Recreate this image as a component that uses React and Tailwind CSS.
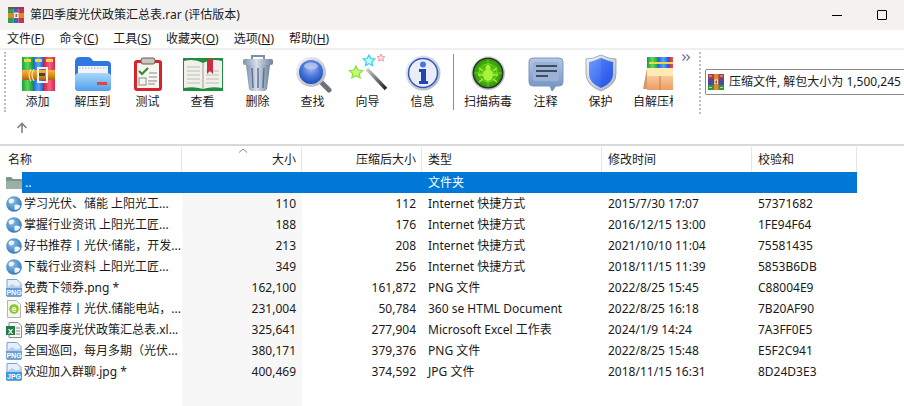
// App.jsx
const FONT = { fontFamily: '"Noto Sans", "Noto Sans CJK SC", sans-serif' };

const Rar16 = () => (
  <svg width="16" height="16" viewBox="0 0 16 16">
    <rect x="0" y="0" width="5.5" height="16" fill="#2f9e44" />
    <rect x="5.5" y="0" width="5" height="16" fill="#3f63c8" />
    <rect x="10.5" y="0" width="5.5" height="16" fill="#c8324e" />
    <rect x="0" y="0" width="16" height="2" fill="#8b2f4d" opacity="0.6" />
    <rect x="0" y="6" width="16" height="5" fill="#d98a2b" />
    <rect x="6" y="5.5" width="4.5" height="5.5" fill="#f6f0e4" />
    <rect x="7.5" y="7" width="1.5" height="3" fill="#b5502a" />
  </svg>
);

const InfoRar = () => (
  <svg width="16" height="16" viewBox="0 0 16 16">
    <rect x="0" y="0" width="16" height="5" fill="#a73a55" />
    <rect x="0" y="5" width="16" height="6" fill="#4b4aa3" />
    <rect x="0" y="11" width="16" height="5" fill="#2c9a45" />
    <rect x="6" y="0" width="4.5" height="16" fill="#dd8a2c" />
    <rect x="6.5" y="5.5" width="3.5" height="4.5" fill="#f7f1e6" />
    <rect x="7.5" y="6.5" width="1.5" height="3" fill="#b33a2c" />
    <rect x="1" y="1.5" width="3" height="1" fill="#e9c65a" />
    <rect x="12" y="1.5" width="3" height="1" fill="#e9c65a" />
    <rect x="1" y="13" width="3" height="1" fill="#e9c65a" />
    <rect x="12" y="13" width="3" height="1" fill="#e9c65a" />
  </svg>
);

// toolbar icons are all drawn on a 40x40 box
const Icon = ({ children }) => (
  <svg width="40" height="40" viewBox="0 0 40 40" className="shrink-0">
    {children}
  </svg>
);

const Defs = () => (
  <svg width="0" height="0" className="absolute">
    <defs>
      <linearGradient id="gGreen" x1="0" x2="1" y1="0" y2="0">
        <stop offset="0" stopColor="#17a03c" />
        <stop offset="0.5" stopColor="#5fd65a" />
        <stop offset="1" stopColor="#179a3a" />
      </linearGradient>
      <linearGradient id="gBlue" x1="0" x2="1" y1="0" y2="0">
        <stop offset="0" stopColor="#1d5fd8" />
        <stop offset="0.5" stopColor="#5ba2f5" />
        <stop offset="1" stopColor="#1c55c8" />
      </linearGradient>
      <linearGradient id="gRed" x1="0" x2="1" y1="0" y2="0">
        <stop offset="0" stopColor="#d81f45" />
        <stop offset="0.5" stopColor="#f8607e" />
        <stop offset="1" stopColor="#d4264f" />
      </linearGradient>
      <linearGradient id="gBelt" x1="0" x2="0" y1="0" y2="1">
        <stop offset="0" stopColor="#f7b53c" />
        <stop offset="0.5" stopColor="#e48f22" />
        <stop offset="1" stopColor="#a8631b" />
      </linearGradient>
      <linearGradient id="gFolder" x1="0" x2="0" y1="0" y2="1">
        <stop offset="0" stopColor="#a9d8fb" />
        <stop offset="1" stopColor="#4f9fee" />
      </linearGradient>
      <linearGradient id="gCan" x1="0" x2="1" y1="0" y2="0">
        <stop offset="0" stopColor="#7e93ad" />
        <stop offset="0.45" stopColor="#d6dfea" />
        <stop offset="1" stopColor="#6c819c" />
      </linearGradient>
      <radialGradient id="gLens" cx="0.5" cy="0.35" r="0.7">
        <stop offset="0" stopColor="#a8b8ee" />
        <stop offset="0.5" stopColor="#4a78dc" />
        <stop offset="1" stopColor="#1746b0" />
      </radialGradient>
      <linearGradient id="gSilver" x1="0" x2="1" y1="0" y2="1">
        <stop offset="0" stopColor="#f4f6f9" />
        <stop offset="1" stopColor="#a9b2bf" />
      </linearGradient>
      <linearGradient id="gWand" x1="0" x2="1" y1="0" y2="1">
        <stop offset="0" stopColor="#cfcfcf" />
        <stop offset="1" stopColor="#222222" />
      </linearGradient>
      <radialGradient id="gScan" cx="0.5" cy="0.5" r="0.55">
        <stop offset="0" stopColor="#6fe01c" />
        <stop offset="1" stopColor="#2f8f08" />
      </radialGradient>
      <linearGradient id="gNote" x1="0" x2="0" y1="0" y2="1">
        <stop offset="0" stopColor="#b4c8e6" />
        <stop offset="1" stopColor="#6e8fc0" />
      </linearGradient>
      <linearGradient id="gShield" x1="0" x2="1" y1="0" y2="1">
        <stop offset="0" stopColor="#6f9cff" />
        <stop offset="1" stopColor="#1f50e6" />
      </linearGradient>
      <linearGradient id="gBox" x1="0" x2="0" y1="0" y2="1">
        <stop offset="0" stopColor="#f8c79a" />
        <stop offset="1" stopColor="#ec9d63" />
      </linearGradient>
      <radialGradient id="gGlobe" cx="0.4" cy="0.35" r="0.75">
        <stop offset="0" stopColor="#8fc0e8" />
        <stop offset="1" stopColor="#2470b4" />
      </radialGradient>
    </defs>
  </svg>
);

const AddIcon = () => (
  <Icon>
    <rect x="4" y="4" width="11" height="34" fill="url(#gGreen)" />
    <rect x="15" y="4" width="11" height="34" fill="url(#gBlue)" />
    <rect x="26" y="4" width="11" height="34" fill="url(#gRed)" />
    <rect x="6" y="6" width="7" height="3" fill="#f3d54a" />
    <rect x="17" y="6" width="7" height="3" fill="#f3d54a" />
    <rect x="28" y="6" width="7" height="3" fill="#f3d54a" />
    <rect x="4" y="17" width="33" height="10" fill="url(#gBelt)" />
    <path d="M13 16 q-4 6 0 12 M16 16 q-4 6 0 12" fill="none" stroke="#f9e3a6" strokeWidth="1.2" />
    <rect x="20" y="15" width="9" height="14" fill="none" stroke="#f4f1ea" strokeWidth="2" />
    <rect x="21" y="20" width="6" height="3" fill="#5b3f22" />
  </Icon>
);

const ExtractIcon = () => (
  <Icon>
    <path d="M2 9 q0 -5 5 -5 h8 q3 0 5 4 h14 q4 0 4 4 v22 q0 4 -4 4 h-28 q-4 0 -4 -4 z" fill="#2f78e0" />
    <rect x="5" y="13" width="30" height="9" fill="#f2f4f7" />
    <path d="M6 15 h28" stroke="#b5bcc6" strokeWidth="1" strokeDasharray="1.5 1.5" />
    <rect x="2" y="20" width="36" height="18" rx="4" fill="url(#gFolder)" />
    <rect x="24" y="29" width="10" height="3" fill="#e5452f" />
  </Icon>
);

const TestIcon = () => (
  <Icon>
    <rect x="6" y="7" width="28" height="31" rx="3" fill="#d8232c" />
    <rect x="9" y="10" width="22" height="25" fill="#f7f5f0" />
    <rect x="13" y="5" width="14" height="6" rx="2" fill="#c9c5bb" stroke="#6b5a50" strokeWidth="1" />
    <path d="M11 18 l3 3 l6 -6" fill="none" stroke="#2d8c3a" strokeWidth="2.2" />
    <rect x="11" y="25" width="7" height="7" fill="none" stroke="#8b8b8b" strokeWidth="1" />
    <path d="M21 20 h8 M21 24 h8 M20 28 h9 M20 31 h7" stroke="#8b8b8b" strokeWidth="1" />
  </Icon>
);

const ViewIcon = () => (
  <Icon>
    <rect x="-1" y="5" width="42" height="33" rx="1" fill="#1f8f3d" />
    <path d="M1 8 q10 -3 19 2 q9 -5 19 -2 v27 q-10 -2 -19 1 q-9 -3 -19 -1 z" fill="#f1f0ea" />
    <path d="M20 10 v26" stroke="#b8b7b0" strokeWidth="1.5" />
    <path d="M4 14 h13 M4 18 h13 M4 22 h13 M4 26 h13 M4 30 h13 M23 18 h13 M23 22 h13 M23 26 h13 M23 30 h13" stroke="#bdbdb8" strokeWidth="1" />
    <path d="M24 6 h6 v15 l-3 -3 l-3 3 z" fill="#d02b3f" />
  </Icon>
);

const TrashIcon = () => (
  <Icon>
    <path d="M14 6 v-3 h12 v3" fill="none" stroke="#7d8fa6" strokeWidth="2" />
    <rect x="5" y="6" width="30" height="6" rx="2" fill="url(#gCan)" />
    <path d="M8 12 h24 l-3 24 q-1 2 -3 2 h-12 q-2 0 -3 -2 z" fill="url(#gCan)" />
    <path d="M14 15 l1 20 M20 15 v20 M26 15 l-1 20" stroke="#5f7390" strokeWidth="1.5" />
  </Icon>
);

const FindIcon = () => (
  <Icon>
    <path d="M28 29 l8 8" stroke="#6d7278" strokeWidth="5" strokeLinecap="round" />
    <circle cx="18" cy="19" r="15" fill="url(#gSilver)" />
    <circle cx="18" cy="19" r="12" fill="url(#gLens)" />
    <ellipse cx="18" cy="13" rx="7" ry="3.5" fill="#c3cdf2" opacity="0.7" />
  </Icon>
);

const WizardIcon = () => (
  <Icon>
    <path d="M19 16 l19 20" stroke="url(#gWand)" strokeWidth="3.5" />
    <path d="M21 2 l1.8 3.5 l4 .5 l-3 2.6 l.8 4 l-3.6 -2 l-3.6 2 l.8 -4 l-3 -2.6 l4 -.5 z" fill="#c8f6ff" stroke="#23d6f0" strokeWidth="1.2" />
    <path d="M33 1 l1.2 2.3 l2.6 .4 l-1.9 1.8 l.5 2.6 l-2.4 -1.3 l-2.4 1.3 l.5 -2.6 l-1.9 -1.8 l2.6 -.4 z" fill="#fde0e3" stroke="#f29aa6" strokeWidth="1" />
    <path d="M8 13 l2 4 l4.5 .6 l-3.2 3 l.8 4.4 l-4.1 -2.2 l-4.1 2.2 l.8 -4.4 l-3.2 -3 l4.5 -.6 z" fill="#c7fb7a" stroke="#7fe32a" strokeWidth="1.2" />
  </Icon>
);

const InfoIcon = () => (
  <Icon>
    <circle cx="20" cy="20" r="17.5" fill="url(#gSilver)" />
    <circle cx="20" cy="20" r="14.5" fill="#e9edf5" stroke="#3556bb" strokeWidth="1.5" />
    <circle cx="20" cy="11.5" r="3" fill="#4679dd" />
    <path d="M16 16 h7 v12 h2 v3 h-9 v-3 h2 v-9 h-2 z" fill="#2146b4" />
  </Icon>
);

const ScanIcon = () => (
  <Icon>
    <circle cx="20" cy="20" r="17" fill="url(#gSilver)" />
    <circle cx="20" cy="20" r="15.5" fill="#2a2f2a" />
    <circle cx="20" cy="20" r="14" fill="url(#gScan)" />
    <path d="M20 6 v28 M6 20 h28" stroke="#8cf02e" strokeWidth="0.8" opacity="0.7" />
    <circle cx="20" cy="20" r="9" fill="none" stroke="#8cf02e" strokeWidth="0.8" opacity="0.7" />
    <ellipse cx="20" cy="22" rx="5" ry="6" fill="#a8f23c" />
    <circle cx="20" cy="14.5" r="2.5" fill="#a8f23c" />
    <path d="M15 18 l-4 -3 M25 18 l4 -3 M15 22 h-5 M25 22 h5 M15 26 l-4 3 M25 26 l4 3" stroke="#a8f23c" strokeWidth="1.4" />
  </Icon>
);

const NoteIcon = () => (
  <Icon>
    <path d="M7 5 h26 q4 0 4 4 v20 q0 4 -4 4 h-3 l-4 5 l-2 -5 h-17 q-4 0 -4 -4 v-20 q0 -4 4 -4 z" fill="url(#gNote)" stroke="#7f97bd" strokeWidth="1" />
    <rect x="7" y="9" width="26" height="19" rx="2" fill="#9bb2d4" />
    <path d="M10 13 h21 M10 18 h21 M10 23 h12" stroke="#3f4d63" strokeWidth="1.8" />
  </Icon>
);

const ShieldIcon = () => (
  <Icon>
    <path d="M20 2 q8 4 15 4 v15 q0 11 -15 17 q-15 -6 -15 -17 v-15 q7 0 15 -4 z" fill="url(#gSilver)" stroke="#8f9cae" strokeWidth="0.8" />
    <path d="M20 5 q7 3 12 4 v12 q0 9 -12 14 q-12 -5 -12 -14 v-12 q5 -1 12 -4 z" fill="url(#gShield)" />
    <path d="M20 5 q7 3 12 4 v12 q0 9 -12 14 z" fill="#1f50e6" opacity="0.25" />
  </Icon>
);

const SfxIcon = () => (
  <Icon>
    <rect x="4" y="4" width="11" height="14" fill="url(#gGreen)" />
    <rect x="15" y="4" width="11" height="14" fill="url(#gBlue)" />
    <rect x="26" y="4" width="11" height="14" fill="url(#gRed)" />
    <rect x="6" y="9" width="30" height="2" fill="#f3d54a" />
    <path d="M4 15 h34 v8 h-34 z" fill="#fde9b3" />
    <path d="M4 15 l-4 21 h4 z" fill="#d99a68" />
    <rect x="4" y="23" width="34" height="14" fill="url(#gBox)" />
    <path d="M17 23 v14" stroke="#c47a45" strokeWidth="1" fill="none" />
  </Icon>
);

const tools = [
  { label: '添加', icon: <AddIcon />, w: 'w-[55px]' },
  { label: '解压到', icon: <ExtractIcon />, w: 'w-[55px]' },
  { label: '测试', icon: <TestIcon />, w: 'w-[55px]' },
  { label: '查看', icon: <ViewIcon />, w: 'w-[55px]' },
  { label: '删除', icon: <TrashIcon />, w: 'w-[55px]' },
  { label: '查找', icon: <FindIcon />, w: 'w-[55px]' },
  { label: '向导', icon: <WizardIcon />, w: 'w-[55px]' },
  { label: '信息', icon: <InfoIcon />, w: 'w-[55px]' },
  { sep: true },
  { label: '扫描病毒', icon: <ScanIcon />, w: 'w-[60px]' },
  { label: '注释', icon: <NoteIcon />, w: 'w-[55px]' },
  { label: '保护', icon: <ShieldIcon />, w: 'w-[55px]' },
  { label: '自解压格式', icon: <SfxIcon />, w: 'w-[70px]' },
];

const menus = [
  ['文件(', 'F', ')'],
  ['命令(', 'C', ')'],
  ['工具(', 'S', ')'],
  ['收藏夹(', 'O', ')'],
  ['选项(', 'N', ')'],
  ['帮助(', 'H', ')'],
];

// small file type icons
const FolderSmall = () => (
  <svg width="16" height="16" viewBox="0 0 16 16">
    <path d="M0 3 q0 -1 1 -1 h4 l2 2 h8 q1 0 1 1 v8 q0 1 -1 1 h-14 q-1 0 -1 -1 z" fill="#7d9589" />
    <rect x="0" y="6" width="16" height="8" rx="1" fill="#9bb0a2" />
  </svg>
);

const GlobeIcon = () => (
  <svg width="16" height="16" viewBox="0 0 16 16">
    <circle cx="8" cy="8" r="7.8" fill="url(#gGlobe)" />
    <path d="M3.5 3 q3.5 -1.5 5 1 q-1 3.5 -4.5 3.5 q-2.5 -2 -.5 -4.5 z M8.5 9 q3.5 -1.5 6 1 q-2 4.5 -6 3.5 z" fill="#eef5fa" />
  </svg>
);

const ImgIcon = ({ kind }) => (
  <svg width="16" height="18" viewBox="0 0 16 18">
    <path d="M1 0.5 h10 l4 4 v13 h-14 z" fill="#e6effa" stroke="#7aa2d0" strokeWidth="1" />
    <path d="M2 8 q4 -5 7 -1 q2 1 5 -1 v3 h-12 z" fill="#b8cfe9" />
    <rect x="0" y="9" width="16" height="8" fill={kind === 'JPG' ? '#3a9be0' : '#6a9fd8'} />
    <text x="8" y="15.6" textAnchor="middle" fontSize="7" fontWeight="700" fill="#ffffff" fontFamily="Liberation Sans, sans-serif">{kind}</text>
  </svg>
);

const HtmlIcon = () => (
  <svg width="16" height="18" viewBox="0 0 16 18">
    <path d="M1.5 0.5 h9 l4 4 v13 h-13 z" fill="#f4f4f2" stroke="#b5b5b0" strokeWidth="1" />
    <circle cx="8" cy="9" r="4.8" fill="#8cc820" />
    <text x="8" y="12" textAnchor="middle" fontSize="8.5" fontWeight="700" fill="#ffffff" fontFamily="Liberation Sans, sans-serif">e</text>
  </svg>
);

const XlsIcon = () => (
  <svg width="16" height="16" viewBox="0 0 16 16">
    <path d="M3 0.5 h9 l3.5 3.5 v11.5 h-12.5 z" fill="#f7f7f5" stroke="#8a8a8a" strokeWidth="1" />
    <path d="M10 6 h4 M10 9 h4 M10 12 h4" stroke="#8a8a8a" strokeWidth="1" />
    <rect x="0" y="4" width="9" height="9" fill="#1e7b45" />
    <text x="4.5" y="11.5" textAnchor="middle" fontSize="8" fontWeight="700" fill="#ffffff" fontFamily="Liberation Sans, sans-serif">X</text>
  </svg>
);

const rows = [
  { icon: <GlobeIcon />, name: '学习光伏、储能 上阳光工...', size: '110', packed: '112', type: 'Internet 快捷方式', time: '2015/7/30 17:07', crc: '57371682' },
  { icon: <GlobeIcon />, name: '掌握行业资讯 上阳光工匠...', size: '188', packed: '176', type: 'Internet 快捷方式', time: '2016/12/15 13:00', crc: '1FE94F64' },
  { icon: <GlobeIcon />, name: '好书推荐丨光伏·储能，开发...', size: '213', packed: '208', type: 'Internet 快捷方式', time: '2021/10/10 11:04', crc: '75581435' },
  { icon: <GlobeIcon />, name: '下载行业资料 上阳光工匠...', size: '349', packed: '256', type: 'Internet 快捷方式', time: '2018/11/15 11:39', crc: '5853B6DB' },
  { icon: <ImgIcon kind="PNG" />, name: '免费下领券.png *', size: '162,100', packed: '161,872', type: 'PNG 文件', time: '2022/8/25 15:45', crc: 'C88004E9' },
  { icon: <HtmlIcon />, name: '课程推荐丨光伏.储能电站，...', size: '231,004', packed: '50,784', type: '360 se HTML Document', time: '2022/8/25 16:18', crc: '7B20AF90' },
  { icon: <XlsIcon />, name: '第四季度光伏政策汇总表.xl...', size: '325,641', packed: '277,904', type: 'Microsoft Excel 工作表', time: '2024/1/9 14:24', crc: '7A3FF0E5' },
  { icon: <ImgIcon kind="PNG" />, name: '全国巡回，每月多期（光伏...', size: '380,171', packed: '379,376', type: 'PNG 文件', time: '2022/8/25 15:48', crc: 'E5F2C941' },
  { icon: <ImgIcon kind="JPG" />, name: '欢迎加入群聊.jpg *', size: '400,469', packed: '374,592', type: 'JPG 文件', time: '2018/11/15 16:31', crc: '8D24D3E3' },
];

const COLS = 'grid grid-cols-[182px_120px_120px_180px_150px_105px] w-[857px]';

const Row = ({ row }) => (
  <div className={`${COLS} h-[21px] shrink-0 items-stretch text-[12px] leading-[21px] text-[#1a1a1a]`}>
    <div className="flex items-center pl-[6px] overflow-hidden">
      <span className="flex w-[18px] shrink-0">{row.icon}</span>
      <span className="whitespace-nowrap">{row.name}</span>
    </div>
    <div className="bg-[#f7f7f7] text-right pr-[6px]">{row.size}</div>
    <div className="text-right pr-[6px]">{row.packed}</div>
    <div className="pl-[6px] whitespace-nowrap">{row.type}</div>
    <div className="pl-[6px] whitespace-nowrap">{row.time}</div>
    <div className="pl-[6px] whitespace-nowrap">{row.crc}</div>
  </div>
);

export default function App() {
  return (
    <div className="relative w-[904px] h-[406px] overflow-hidden bg-white flex flex-col" style={FONT}>
      <Defs />

      {/* Title bar */}
      <div className="h-[30px] bg-[#f3f2f1] flex items-center pl-[8px] shrink-0">
        <Rar16 />
        <span className="ml-[6px] text-[12px] text-[#1a1a1a] whitespace-nowrap">第四季度光伏政策汇总表.rar (评估版本)</span>
        <div className="ml-auto flex items-center">
          <div className="w-[10px] h-px bg-black mr-[35px]" />
          <div className="w-[10px] h-[10px] border border-black rounded-[1px] mr-[17px]" />
        </div>
      </div>

      {/* Menu */}
      <div className="h-[18px] flex items-center pl-[7px] gap-[15px] text-[12px] text-[#1a1a1a] shrink-0">
        {menus.map(([a, b, c]) => (
          <span key={a} className="whitespace-nowrap">
            {a}
            <span className="underline">{b}</span>
            {c}
          </span>
        ))}
      </div>
      <div className="h-[2px] bg-[#f0f0f0] shrink-0" />

      {/* Toolbar */}
      <div className="h-[96px] shrink-0 flex flex-col border-b-2 border-[#d9d9d9]">
        <div className="h-[64px] flex pt-[2px] shrink-0">
          <div className="ml-[4px] w-0 h-[60px] border-l-2 border-dotted border-[#bdbdbd]" />
          <div className="ml-[4px] w-[663px] flex overflow-hidden shrink-0">
            {tools.map((t, i) =>
              t.sep ? (
                <div key={i} className="shrink-0 w-[8px] pl-[3px]">
                  <div className="w-px h-[56px] bg-[#8c8c8c] mt-[2px]" />
                </div>
              ) : (
                <div key={t.label} className={`${t.w} shrink-0 flex flex-col items-center`}>
                  <div className="h-[41px] flex items-center justify-center">{t.icon}</div>
                  <span className="text-[12px] leading-[17px] text-[#1a1a1a] whitespace-nowrap">{t.label}</span>
                </div>
              )
            )}
          </div>
          <svg width="9" height="7" viewBox="0 0 9 7" className="ml-[9px] mt-[2px] shrink-0">
            <path d="M0.5 0.5 L3.5 3.5 L0.5 6.5 M4.5 0.5 L7.5 3.5 L4.5 6.5" fill="none" stroke="#6f6f9a" strokeWidth="1.2" />
          </svg>
          <div className="ml-[8px] w-0 h-[62px] border-l-2 border-dotted border-[#bdbdbd]" />
          <div className="ml-[4px] mt-[17px] h-[26px] w-[230px] shrink-0 border border-[#8a8a8a] rounded-[2px] flex items-center pl-[2px]">
            <InfoRar />
            <span className="ml-[5px] text-[12px] text-[#1a1a1a] whitespace-nowrap">压缩文件, 解包大小为 1,500,245</span>
          </div>
        </div>
        <div className="pl-[16px] pt-[8px]">
          <svg width="12" height="12" viewBox="0 0 12 12">
            <path d="M6 11 V1.5 M1.5 6 L6 1.5 L10.5 6" fill="none" stroke="#808080" strokeWidth="1.6" />
          </svg>
        </div>
      </div>

      {/* File list */}
      <div className="flex-1 flex flex-col pt-px border-l border-[#e0e0e0] relative -ml-px">
        <div className={`${COLS} h-[25px] shrink-0 text-[12px] leading-[25px] text-[#1a1a1a]`}>
          <div className="pl-[8px] border-r border-[#e5e5e5]">名称</div>
          <div className="text-right pr-[5px] border-r border-[#e5e5e5]">大小</div>
          <div className="text-right pr-[5px] border-r border-[#e5e5e5]">压缩后大小</div>
          <div className="pl-[6px] border-r border-[#e5e5e5]">类型</div>
          <div className="pl-[6px] border-r border-[#e5e5e5]">修改时间</div>
          <div className="pl-[6px] border-r border-[#e5e5e5]">校验和</div>
        </div>
        <svg width="10" height="5" viewBox="0 0 10 5" className="absolute left-[238px] top-[2px]">
          <path d="M1 4.5 L5 1 L9 4.5" fill="none" stroke="#8a8a8a" strokeWidth="1" />
        </svg>

        {/* Parent folder row, selected */}
        <div className={`${COLS} h-[21px] shrink-0 text-[12px] leading-[21px] text-white`}>
          <div className="flex items-center pl-[6px]">
            <span className="flex w-[16px] shrink-0"><FolderSmall /></span>
            <span className="flex-1 h-full bg-[#0078d7] pl-[3px]">..</span>
          </div>
          <div className="bg-[#0078d7]" />
          <div className="bg-[#0078d7]" />
          <div className="bg-[#0078d7] pl-[6px]">文件夹</div>
          <div className="bg-[#0078d7]" />
          <div className="bg-[#0078d7]" />
        </div>

        {rows.map((row) => (
          <Row key={row.crc} row={row} />
        ))}
        <div className={`${COLS} flex-1`}>
          <div />
          <div className="bg-[#f7f7f7]" />
        </div>
      </div>
    </div>
  );
}
